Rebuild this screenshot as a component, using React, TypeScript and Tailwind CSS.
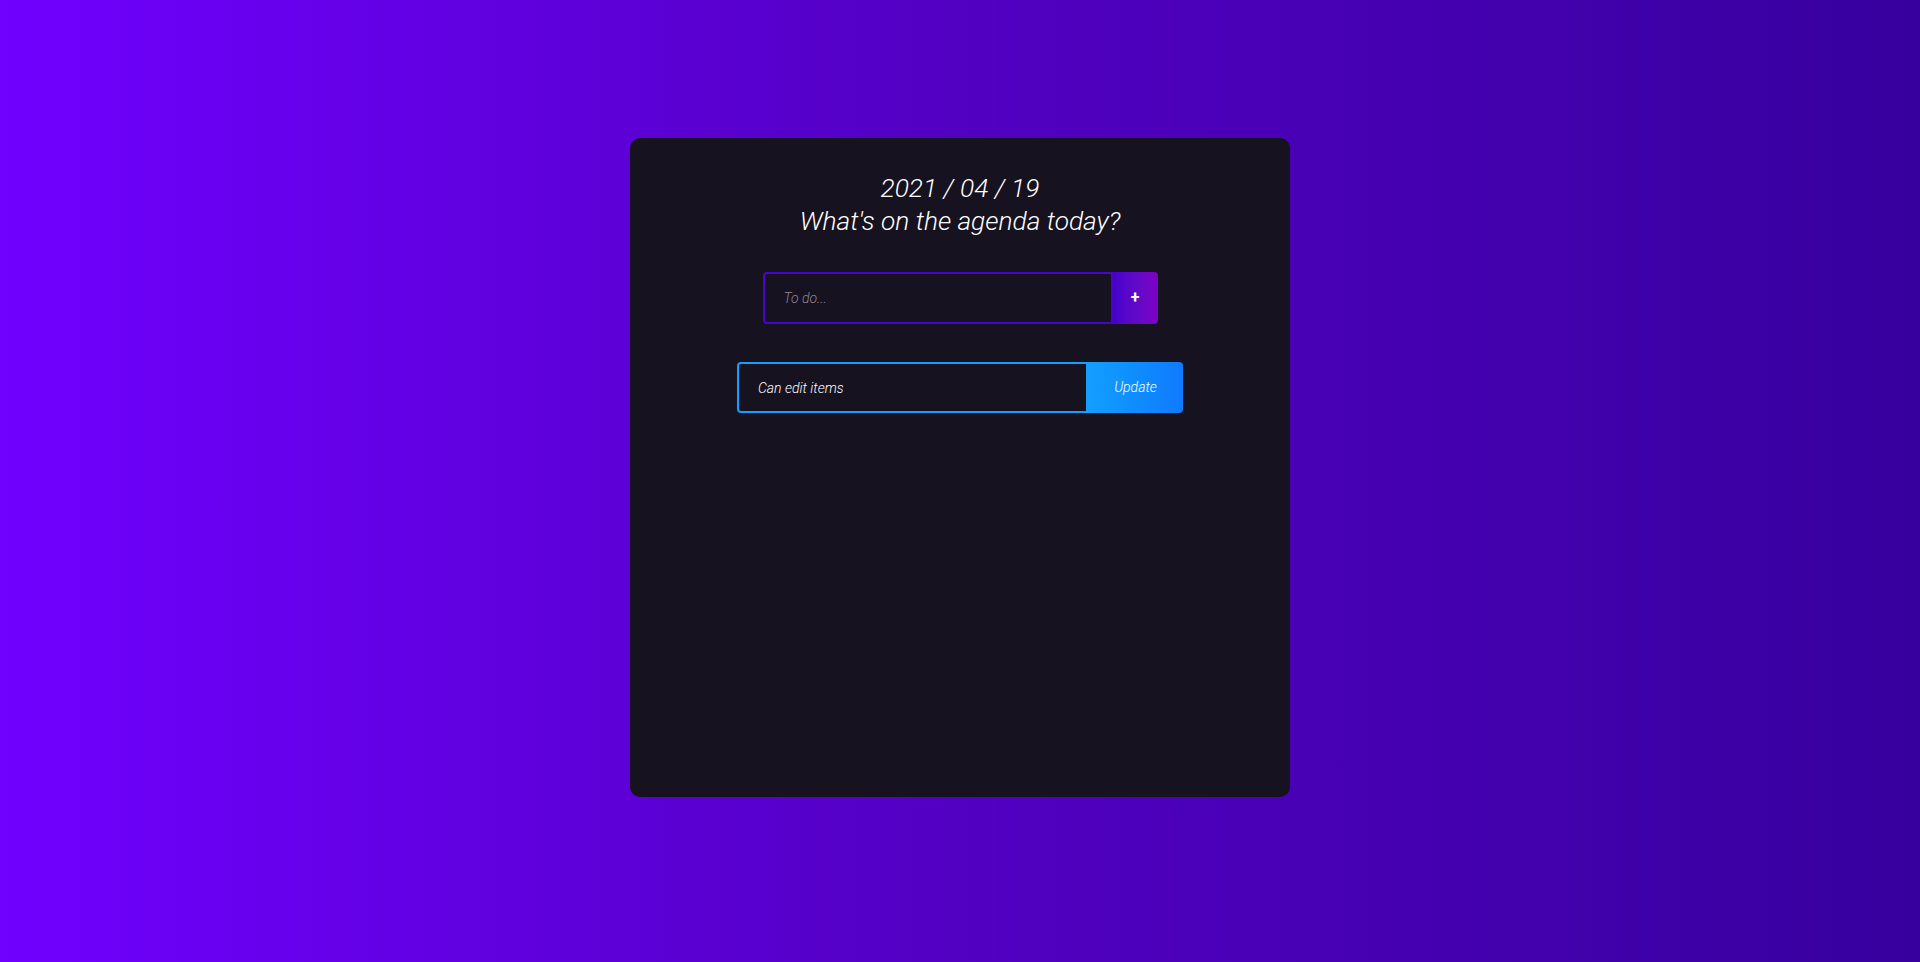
import React, { useState } from 'react';

const TodoForm: React.FC<{ edit?: boolean; value: string; onChange: (v: string) => void }> = ({ edit, value, onChange }) => {
  if (edit) {
    return (
      <form className="flex justify-center" onSubmit={(e) => e.preventDefault()}>
        <input
          autoFocus
          value={value}
          onChange={(e) => onChange(e.target.value)}
          placeholder="Update your item"
          className="w-[351px] h-[51px] pl-[19px] pr-8 bg-transparent border-2 border-[#149fff] rounded-l-[4px] text-white caret-white text-[14px] font-light italic outline-none placeholder:text-[#8c8a99]"
        />
        <button className="w-[95px] h-[51px] rounded-r-[4px] bg-gradient-to-r from-[#149fff] to-[#117aff] text-white text-[14px] font-light italic">
          Update
        </button>
      </form>
    );
  }
  return (
    <form className="flex justify-center" onSubmit={(e) => e.preventDefault()}>
      <input
        value={value}
        onChange={(e) => onChange(e.target.value)}
        placeholder="To do..."
        className="w-[350px] h-[52px] pl-[19px] pr-8 bg-transparent border-2 border-[#4a05cc] rounded-l-[4px] text-white text-[14px] font-light italic outline-none placeholder:text-[#8c8a99]"
      />
      <button className="w-[45px] h-[52px] rounded-r-[4px] bg-gradient-to-r from-[#4500cb] to-[#7c00c6] text-white text-[16px] font-bold">
        +
      </button>
    </form>
  );
};

export default function App() {
  const [todo, setTodo] = useState('');
  const [editText, setEditText] = useState('Can edit items');

  return (
    <div
      className="min-h-screen w-full bg-gradient-to-r from-[#7000ff] via-[#5200c2] to-[#37009e] pt-[138px] overflow-hidden"
      style={{ fontFamily: 'Roboto, "Noto Sans", sans-serif' }}
    >
      <div className="mx-auto w-[660px] h-[659px] bg-[#16121f] rounded-[10px] pt-[34px] flex flex-col">
        <h1 className="text-center text-white text-[26.3px] leading-[33px] font-light italic">
          2021 / 04 / 19
          <br />
          What's on the agenda today?
        </h1>
        <div className="mt-[34px]">
          <TodoForm value={todo} onChange={setTodo} />
        </div>
        <div className="mt-[38px]">
          <TodoForm edit value={editText} onChange={setEditText} />
        </div>
      </div>
    </div>
  );
}
